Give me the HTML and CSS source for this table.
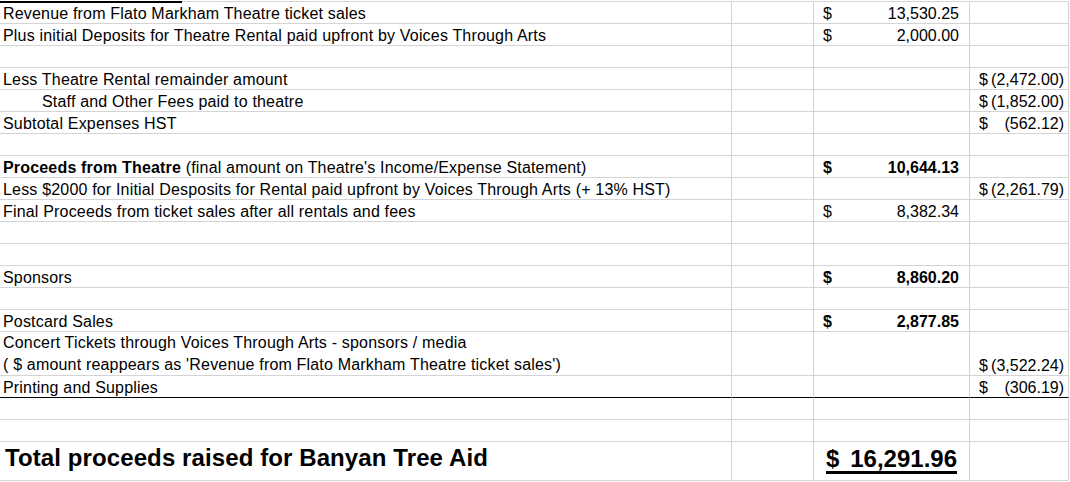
FILE: index.html
```html
<!DOCTYPE html>
<html>
<head>
<meta charset="utf-8">
<link rel="stylesheet" href="styles.css">
</head>
<body>
<div class="sheet">
  <div class="row"><div class="c a">Revenue from Flato Markham Theatre ticket sales</div><div class="c b"></div><div class="c d"><span>$</span><span>13,530.25</span></div><div class="c e"></div></div>
  <div class="row"><div class="c a">Plus initial Deposits for Theatre Rental paid upfront by Voices Through Arts</div><div class="c b"></div><div class="c d"><span>$</span><span>2,000.00</span></div><div class="c e"></div></div>
  <div class="row"><div class="c a"></div><div class="c b"></div><div class="c d"></div><div class="c e"></div></div>
  <div class="row"><div class="c a">Less Theatre Rental remainder amount</div><div class="c b"></div><div class="c d"></div><div class="c e"><span>$</span><span>(2,472.00)</span></div></div>
  <div class="row"><div class="c a indent">Staff and Other Fees paid to theatre</div><div class="c b"></div><div class="c d"></div><div class="c e"><span>$</span><span>(1,852.00)</span></div></div>
  <div class="row"><div class="c a">Subtotal Expenses HST</div><div class="c b"></div><div class="c d"></div><div class="c e"><span>$</span><span>(562.12)</span></div></div>
  <div class="row"><div class="c a"></div><div class="c b"></div><div class="c d"></div><div class="c e"></div></div>
  <div class="row"><div class="c a"><span><b>Proceeds from Theatre</b> (final amount on Theatre's Income/Expense Statement)</span></div><div class="c b"></div><div class="c d bold"><span>$</span><span>10,644.13</span></div><div class="c e"></div></div>
  <div class="row"><div class="c a">Less $2000 for Initial Desposits for Rental paid upfront by Voices Through Arts (+ 13% HST)</div><div class="c b"></div><div class="c d"></div><div class="c e"><span>$</span><span>(2,261.79)</span></div></div>
  <div class="row"><div class="c a">Final Proceeds from ticket sales after all rentals and fees</div><div class="c b"></div><div class="c d"><span>$</span><span>8,382.34</span></div><div class="c e"></div></div>
  <div class="row"><div class="c a"></div><div class="c b"></div><div class="c d"></div><div class="c e"></div></div>
  <div class="row"><div class="c a"></div><div class="c b"></div><div class="c d"></div><div class="c e"></div></div>
  <div class="row"><div class="c a">Sponsors</div><div class="c b"></div><div class="c d bold"><span>$</span><span>8,860.20</span></div><div class="c e"></div></div>
  <div class="row"><div class="c a"></div><div class="c b"></div><div class="c d"></div><div class="c e"></div></div>
  <div class="row"><div class="c a">Postcard Sales</div><div class="c b"></div><div class="c d bold"><span>$</span><span>2,877.85</span></div><div class="c e"></div></div>
  <div class="row tall"><div class="c a wrap">Concert Tickets through Voices Through Arts - sponsors / media<br>( $ amount reappears as 'Revenue from Flato Markham Theatre ticket sales')</div><div class="c b"></div><div class="c d"></div><div class="c e"><span>$</span><span>(3,522.24)</span></div></div>
  <div class="row ruled"><div class="c a">Printing and Supplies</div><div class="c b"></div><div class="c d"></div><div class="c e"><span>$</span><span>(306.19)</span></div></div>
  <div class="row"><div class="c a"></div><div class="c b"></div><div class="c d"></div><div class="c e"></div></div>
  <div class="row"><div class="c a"></div><div class="c b"></div><div class="c d"></div><div class="c e"></div></div>
  <div class="row total"><div class="c a">Total proceeds raised for Banyan Tree Aid</div><div class="c b"></div><div class="c d"><span class="sum"><span>$</span><span>16,291.96</span></span></div><div class="c e"></div></div>
</div>
</body>
</html>
```
FILE: styles.css
```css
html, body {
  margin: 0;
  padding: 0;
  background: #ffffff;
}
body {
  font-family: "Liberation Sans", Arial, sans-serif;
  font-size: 16px;
  color: #000000;
}
.sheet {
  position: relative;
  margin-top: 1px;
  width: 1069px;
  border-top: 1px solid #d4d4d4;
}
.sheet::before {
  content: "";
  position: absolute;
  left: 0;
  top: -1px;
  width: 182px;
  height: 2px;
  background: #000000;
}
.row {
  display: grid;
  grid-template-columns: 732px 82px 156px 99px;
  height: 22px;
}
.c {
  box-sizing: border-box;
  border-bottom: 1px solid #d4d4d4;
  border-right: 1px solid #d4d4d4;
  display: flex;
  align-items: flex-end;
  line-height: 18px;
  white-space: nowrap;
  overflow: hidden;
}
.a {
  padding-left: 3px;
  letter-spacing: 0.18px;
}
.a.indent {
  padding-left: 42px;
}
.d {
  justify-content: space-between;
  padding: 0 10px 0 9px;
}
.e {
  justify-content: space-between;
  padding: 0 4px 0 9px;
}
.bold {
  font-weight: bold;
}
.tall {
  height: 44px;
}
.a.wrap {
  align-items: flex-start;
  line-height: 22px;
}
.ruled .c {
  border-bottom-color: #000000;
}
.total {
  height: 39px;
}
.total .a {
  font-size: 24px;
  font-weight: bold;
  line-height: 28px;
  letter-spacing: 0.1px;
  padding-left: 5px;
  padding-bottom: 8px;
}
.total .d {
  padding: 0 12px 6px 12px;
}
.sum {
  flex: 1;
  display: flex;
  justify-content: space-between;
  font-size: 24px;
  font-weight: bold;
  line-height: 25px;
  border-bottom: 3px solid #000000;
}
```
